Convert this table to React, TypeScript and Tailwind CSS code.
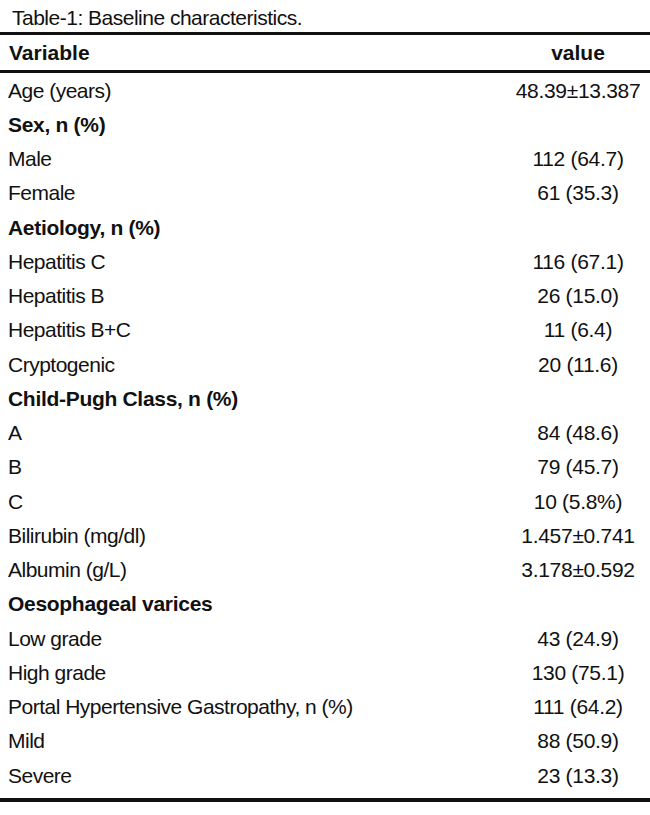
import React from "react";

type Row = { label: string; value?: string; bold?: boolean };

const rows: Row[] = [
  { label: "Age (years)", value: "48.39±13.387" },
  { label: "Sex, n (%)", bold: true },
  { label: "Male", value: "112 (64.7)" },
  { label: "Female", value: "61 (35.3)" },
  { label: "Aetiology, n (%)", bold: true },
  { label: "Hepatitis C", value: "116 (67.1)" },
  { label: "Hepatitis B", value: "26 (15.0)" },
  { label: "Hepatitis B+C", value: "11 (6.4)" },
  { label: "Cryptogenic", value: "20 (11.6)" },
  { label: "Child-Pugh Class, n (%)", bold: true },
  { label: "A", value: "84 (48.6)" },
  { label: "B", value: "79 (45.7)" },
  { label: "C", value: "10 (5.8%)" },
  { label: "Bilirubin (mg/dl)", value: "1.457±0.741" },
  { label: "Albumin (g/L)", value: "3.178±0.592" },
  { label: "Oesophageal varices", bold: true },
  { label: "Low grade", value: "43 (24.9)" },
  { label: "High grade", value: "130 (75.1)" },
  { label: "Portal Hypertensive Gastropathy, n (%)", value: "111 (64.2)" },
  { label: "Mild", value: "88 (50.9)" },
  { label: "Severe", value: "23 (13.3)" },
];

export default function App() {
  return (
    <div className="w-[650px] h-[815px] bg-white text-[#111111] font-['Liberation_Sans',sans-serif] text-[21px] leading-none">
      <div className="h-[32px] pl-[12px] pt-[2px] flex items-center tracking-[-0.5px]">Table-1: Baseline characteristics.</div>
      <div className="h-[3px] bg-[#111111]" />
      <div className="h-[35px] flex items-center font-bold">
        <div className="flex-1 pl-[9px]">Variable</div>
        <div className="w-[144px] text-center">value</div>
      </div>
      <div className="h-[3px] bg-[#111111]" />
      <div className="flex flex-col">
        {rows.map((r, i) => (
          <div key={i} className="h-[34.25px] flex items-center">
            <div className={"flex-1 pl-[8px] " + (r.bold ? "font-bold tracking-[-0.3px]" : "tracking-[-0.5px]")}>{r.label}</div>
            <div className="w-[144px] text-center tracking-[-0.3px]">{r.value ?? ""}</div>
          </div>
        ))}
      </div>
      <div className="h-[6px]" />
      <div className="h-[4px] bg-[#111111]" />
    </div>
  );
}
